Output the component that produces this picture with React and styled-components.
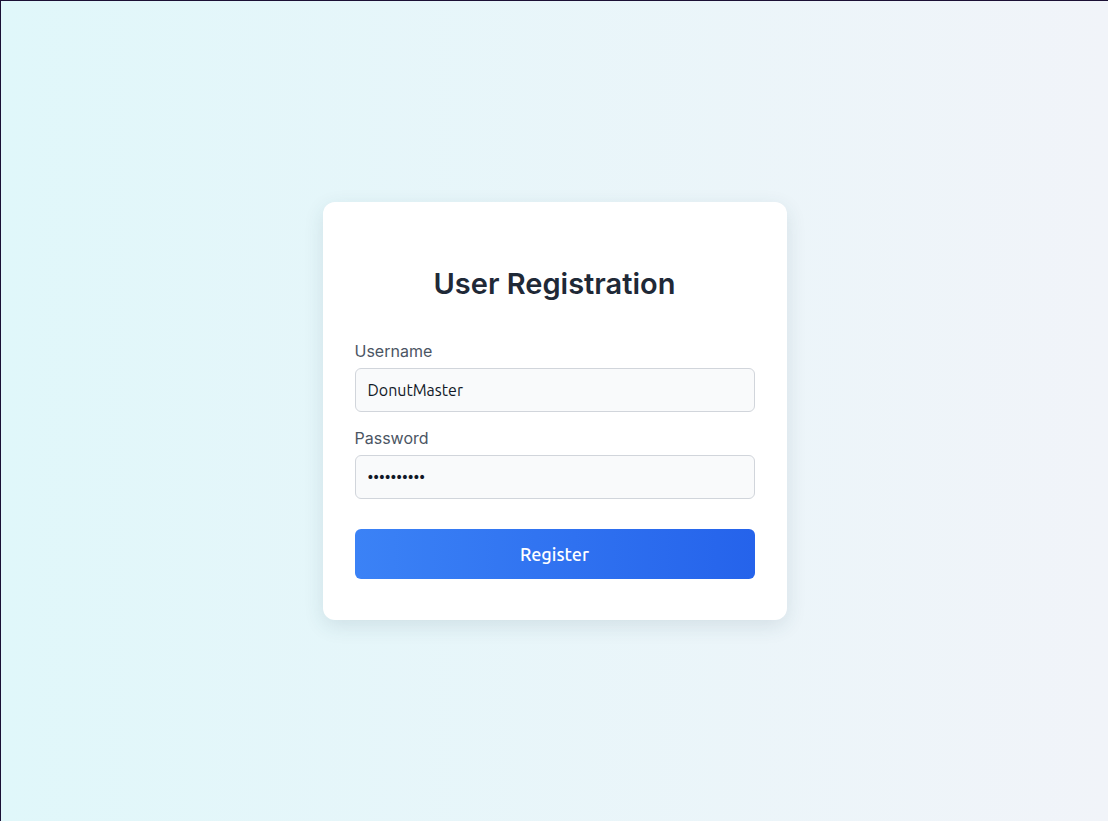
import styled, { createGlobalStyle } from 'styled-components';

const GlobalStyle = createGlobalStyle`
* {
    box-sizing: border-box;
}
body {
    margin: 0;
    font-family: Inter, "Noto Sans", sans-serif;
}
`;

const Page = styled.div`
min-height: 100vh;
display: flex;
align-items: center;
justify-content: center;
background: linear-gradient(to right, #e0f7fa, #f1f4f9);
border-top: 1px solid #1b1035;
border-left: 1px solid #1b1035;
`;

const Card = styled.form`
width: 464px;
background: #ffffff;
border-radius: 12px;
padding: 40px 32px 41px;
box-shadow: 0 6px 20px rgba(40, 70, 90, 0.12);
`;

const Title = styled.h1`
margin: 24px 0 38px;
text-align: center;
font-size: 29px;
font-weight: 600;
color: #1f2937;
`;

const Field = styled.div`
display: flex;
flex-direction: column;
margin-bottom: ${(props) => props.last ? '30px' : '14px'};
`;

const Label = styled.label`
font-size: 16px;
line-height: 24px;
color: #4b5563;
margin-bottom: 5px;
`;

const Input = styled.input`
height: 44px;
padding: 0 12px;
border: 1px solid #d1d5db;
border-radius: 6px;
background: #f9fafb;
font-family: Ubuntu, "Open Sans", sans-serif;
font-size: 16px;
color: #111827;
outline: none;
`;

const Button = styled.button`
width: 100%;
height: 50px;
border: none;
border-radius: 6px;
background: linear-gradient(to right, #3b82f6, #2563eb);
color: #ffffff;
font-family: Ubuntu, "Open Sans", sans-serif;
font-size: 18px;
font-weight: 500;
padding-bottom: 2px;
cursor: pointer;
`;

const App = () => {
    return (
        <>
            <GlobalStyle />
            <Page>
                <Card onSubmit={(e) => e.preventDefault()}>
                    <Title>User Registration</Title>
                    <Field>
                        <Label htmlFor="username">Username</Label>
                        <Input id="username" type="text" defaultValue="DonutMaster" />
                    </Field>
                    <Field last>
                        <Label htmlFor="password">Password</Label>
                        <Input id="password" type="password" defaultValue="donut12345" />
                    </Field>
                    <Button type="submit">Register</Button>
                </Card>
            </Page>
        </>
    );
};

export default App;
